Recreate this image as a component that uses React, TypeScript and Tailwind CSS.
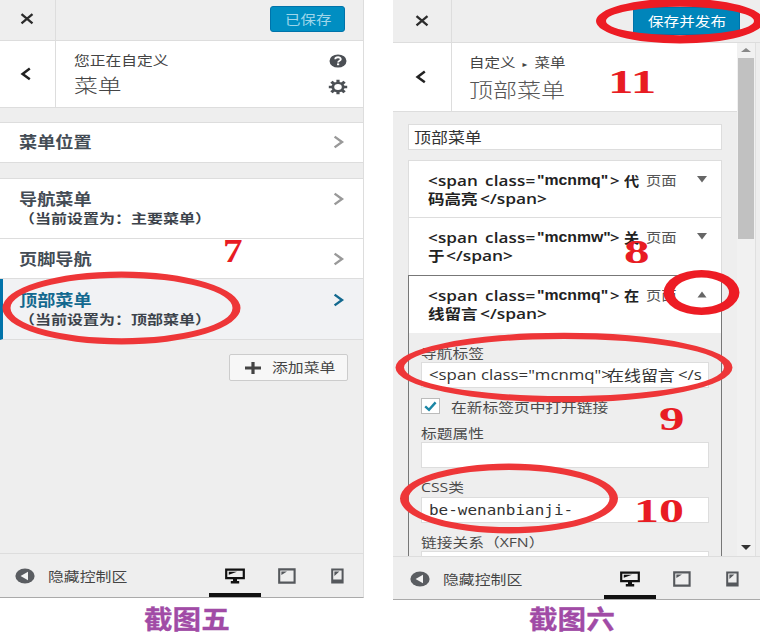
import type { ReactNode } from 'react'
import clsx from 'clsx'

const CJK = "font-['Noto_Sans_CJK_SC',sans-serif]"
const LATIN = "font-['Open_Sans','Noto_Sans_CJK_SC',sans-serif]"

// Wide-set text: the scale is given by the caller, always from the left edge
function Wide({ className, children }: { className?: string; children: ReactNode }) {
  return <span className={clsx('block origin-left whitespace-pre', className)}>{children}</span>
}

function CloseIcon() {
  return (
    <svg width="14" height="12" viewBox="0 0 14 12" fill="none" stroke="#2b2b2b" strokeWidth="2.3">
      <path d="M1.5 1.2 L12.5 10.4 M12.5 1.2 L1.5 10.4" />
    </svg>
  )
}

function BackIcon() {
  return (
    <svg width="12" height="14" viewBox="0 0 12 14" fill="none" stroke="#222" strokeWidth="2.5">
      <path d="M9.8 1.6 L2.6 7 L9.8 12.2" />
    </svg>
  )
}

function Chevron({ className }: { className?: string }) {
  return (
    <svg className={className} width="12" height="14" viewBox="0 0 12 14" fill="none" stroke="currentColor" strokeWidth="2.4">
      <path d="M1.6 1.6 L9 7 L1.6 12.4" />
    </svg>
  )
}

function HelpIcon() {
  return (
    <svg width="18" height="14" viewBox="0 0 18 14">
      <ellipse cx="9" cy="7" rx="8.5" ry="6.6" fill="#4b4f54" />
      <path d="M6.2 5.2 C6.4 2.6 11.8 2.6 11.8 5.2 C11.8 6.8 9.1 6.6 9.1 8.4" fill="none" stroke="#fff" strokeWidth="1.8" />
      <rect x="8" y="9.4" width="2.2" height="1.8" fill="#fff" />
    </svg>
  )
}

function GearIcon() {
  return (
    <svg width="20" height="16" viewBox="0 0 20 20" preserveAspectRatio="none" stroke="#4b4f54" fill="none">
      <path
        d="M10 0.8 V4 M10 16 V19.2 M0.8 10 H4 M16 10 H19.2 M3.4 3.4 L5.9 5.9 M14.1 14.1 L16.6 16.6 M16.6 3.4 L14.1 5.9 M5.9 14.1 L3.4 16.6"
        strokeWidth="3.2"
      />
      <circle cx="10" cy="10" r="5.2" strokeWidth="2.8" />
    </svg>
  )
}

function CollapseIcon() {
  return (
    <svg width="20" height="16" viewBox="0 0 20 16">
      <ellipse cx="10" cy="8" rx="9.6" ry="7.6" fill="#5a5d61" />
      <path d="M13 3.8 V12.2 L5.6 8 Z" fill="#f4f4f4" />
    </svg>
  )
}

function Devices() {
  return (
    <>
      <div className="flex w-[52px] flex-col items-center border-b-4 border-[#111] pt-[14px]">
        <svg width="20" height="16" viewBox="0 0 20 16">
          <path d="M1.2 1.6 H18.8 V10.2 H1.2 Z" fill="none" stroke="#111" strokeWidth="2.2" />
          <path d="M3.8 3.8 H12 L3.8 6.8 Z M8 11 H12 V13 H14.2 V15.4 H5.8 V13 H8 Z" fill="#111" />
        </svg>
      </div>
      <div className="flex w-[51px] justify-center pt-[14px]">
        <svg width="18" height="16" viewBox="0 0 18 16">
          <path d="M1.2 1.4 H16.6 V14.6 H1.2 Z" fill="none" stroke="#55585c" strokeWidth="2.1" />
          <path d="M3.4 3.4 H9 L3.4 7 Z" fill="#55585c" />
        </svg>
      </div>
      <div className="flex w-[51px] justify-center pt-[14px]">
        <svg width="13" height="16" viewBox="0 0 13 16">
          <path d="M1.2 1.4 H11.6 V14.6 H1.2 Z" fill="none" stroke="#55585c" strokeWidth="2" />
          <path d="M3.4 3.4 H8.4 L3.4 8 Z M2 11.6 H11 V14 H2 Z" fill="#55585c" />
        </svg>
      </div>
    </>
  )
}

function Footer({ className, devices }: { className?: string; devices: string }) {
  return (
    <div className={clsx('flex shrink-0 border-t border-[#ddd] bg-[#eee]', className)}>
      <div className="flex items-center pt-px">
        <CollapseIcon />
        <Wide className={clsx(CJK, 'ml-[13px] w-[80px] scale-x-[1.22] text-[13px] leading-4 text-[#444]')}>隐藏控制区</Wide>
      </div>
      <div className={clsx('flex', devices)}>
        <Devices />
      </div>
    </div>
  )
}

function MenuRow({ title, note, active, className }: { title: string; note?: string; active?: boolean; className?: string }) {
  return (
    <div
      className={clsx(
        'flex justify-between border-b border-[#ddd] pr-[18px]',
        active ? 'border-l-[3px] border-l-[#0073aa] bg-[#f1f2f4] pl-4' : 'bg-white pl-[19px]',
        className,
      )}
    >
      <div>
        <Wide className={clsx(CJK, 'scale-x-[1.17] text-[15.5px] font-bold leading-5', active ? 'text-[#13698f]' : 'text-[#444c55]')}>
          {title}
        </Wide>
        {note && <Wide className={clsx(CJK, 'scale-x-[1.23] text-[13px] font-bold leading-5 text-[#3c434b]')}>{note}</Wide>}
      </div>
      <Chevron className={clsx('mt-1', active ? 'text-[#13698f]' : 'text-[#999]')} />
    </div>
  )
}

function LeftPanel() {
  return (
    <section className="flex h-[598px] w-[364px] flex-col border-b border-r border-b-[#aaa] border-r-[#ddd] bg-[#eee]">
      <div className="flex h-[41px] shrink-0 border-b border-[#ddd]">
        <div className="flex w-14 items-center border-r border-[#ddd] pb-[2px] pl-5">
          <CloseIcon />
        </div>
        <div className="flex flex-1 justify-end pr-[18px] pt-[6px]">
          <div className="h-[26px] w-[75px] rounded-[3px] border border-[#0073aa] bg-[#008ec2] pl-[14px]">
            <Wide className={clsx(CJK, 'scale-x-[1.19] text-[13px] leading-[23px] text-[#9fd6ea]')}>已保存</Wide>
          </div>
        </div>
      </div>
      <div className="flex h-[67px] shrink-0 border-b border-[#ddd] bg-white">
        <div className="flex w-14 items-center border-r border-[#ddd] pl-5">
          <BackIcon />
        </div>
        <div className="flex-1 pl-[18px] pt-[9px]">
          <Wide className={clsx(CJK, 'scale-x-[1.21] text-[13px] leading-5 text-[#444]')}>您正在自定义</Wide>
          <Wide className={clsx(CJK, 'mt-[3px] scale-x-[1.22] text-[19.5px] font-light leading-6 text-[#444]')}>菜单</Wide>
        </div>
        <div className="flex w-10 flex-col items-center gap-[11px] pr-[10px] pt-[13px]">
          <HelpIcon />
          <GearIcon />
        </div>
      </div>
      <MenuRow title="菜单位置" className="mt-[14px] h-[41px] border-t pt-2" />
      <MenuRow title="导航菜单" note="（当前设置为：主要菜单）" className="mt-[15px] h-[61px] border-t pt-[9px]" />
      <MenuRow title="页脚导航" className="h-10 pt-[9px]" />
      <MenuRow title="顶部菜单" note="（当前设置为：顶部菜单）" active className="h-[61px] pt-[10px]" />
      <div className="flex flex-1 items-start justify-end pr-[15px] pt-[14px]">
        <div className="flex h-[27px] w-[119px] items-center rounded-[2px] border border-[#ccc] bg-[#f7f7f7] pl-[15px]">
          <svg width="16" height="14" viewBox="0 0 16 14" fill="#444">
            <path d="M6.4 1 H9.6 V5.4 H16 V8.6 H9.6 V13 H6.4 V8.6 H0 V5.4 H6.4 Z" />
          </svg>
          <Wide className={clsx(CJK, 'ml-[11px] scale-x-[1.22] pb-[2px] text-[13px] leading-5 text-[#444]')}>添加菜单</Wide>
        </div>
      </div>
      <Footer className="h-11 pl-[15px]" devices="ml-[81px]" />
    </section>
  )
}

function ItemTitle({ name, head, tail, tailWidth }: { name: string; head: string; tail: string; tailWidth: string }) {
  return (
    <div className={clsx(LATIN, 'text-[14px] font-semibold leading-[19px] text-[#222]')}>
      <div className="flex">
        <Wide className="w-[109px] scale-x-[1.22] tracking-[0.1px] [word-spacing:2px]">{'<span class='}</Wide>
        <Wide className="w-[73px] font-['Liberation_Sans',sans-serif] text-[14.5px] font-bold">
          <span className="inline-block origin-left scale-x-[1.09]">{`"${name}"`}</span>
        </Wide>
        <Wide className="w-[14px] scale-x-[1.2]">{'>'}</Wide>
        <Wide className="w-[22px] scale-x-[1.08] font-bold">{head}</Wide>
        <Wide className="scale-x-[1.18] font-['Noto_Sans_CJK_SC',sans-serif] text-[13px] font-normal leading-[17px] text-[#555]">页面</Wide>
      </div>
      <div className="-mt-px flex">
        <Wide className={clsx(tailWidth, 'scale-x-[1.18] font-bold')}>{tail}</Wide>
        <Wide className="scale-x-[1.24]">{'</span>'}</Wide>
      </div>
    </div>
  )
}

function Triangle({ up }: { up?: boolean }) {
  return (
    <svg className="mt-[5px]" width="10" height="7" viewBox="0 0 10 7" fill="#666">
      <path d={up ? 'M0.5 6.4 L5 0.6 L9.5 6.4 Z' : 'M0 0 H10 L5 6.4 Z'} />
    </svg>
  )
}

function Label({ className, children }: { className?: string; children: ReactNode }) {
  return <Wide className={clsx(CJK, 'scale-x-[1.21] text-[13px] leading-[18px] text-[#4a4a4a]', className)}>{children}</Wide>
}

function Field({ children, className }: { children?: ReactNode; className?: string }) {
  return <div className={clsx('flex h-[26px] w-[288px] border border-[#ddd] bg-white pl-[7px]', className)}>{children}</div>
}

function RightPanel() {
  return (
    <section className="flex h-[600px] w-[367px] flex-col border-b border-[#aaa] bg-[#eee]">
      <div className="flex h-[43px] shrink-0 border-b border-[#ddd]">
        <div className="flex w-[59px] items-center border-r border-[#ddd] pl-[22px]">
          <CloseIcon />
        </div>
        <div className="ml-[181px] mt-[7px] h-[28px] w-[107px] border border-[#0073aa] bg-[#0085ba] pl-[14px]">
          <Wide className={clsx(CJK, 'scale-x-[1.2] text-[13px] leading-[25px] text-white')}>保存并发布</Wide>
        </div>
      </div>

      <div className="flex h-[513px] shrink-0 overflow-hidden">
        <div className="w-[344px]">
          <div className="flex h-[69px] border-b border-[#ddd] bg-white">
            <div className="flex w-[59px] items-center border-r border-[#ddd] pl-[22px]">
              <BackIcon />
            </div>
            <div className="pl-[17px] pt-[9px]">
              <Wide className={clsx(CJK, 'flex scale-x-[1.19] text-[13px] leading-5 text-[#444]')}>
                <span className="w-[55px]">
                  自定义<span className="pl-[6px] font-['DejaVu_Sans',sans-serif] text-[8px]">▸</span>
                </span>
                <span>菜单</span>
              </Wide>
              <Wide className={clsx(CJK, 'mt-[3px] scale-x-[1.2] text-[20px] font-light leading-6 text-[#555]')}>顶部菜单</Wide>
            </div>
          </div>

          <div className="pl-[15px] pt-3">
            <div className="h-[26px] w-[314px] border border-[#ddd] bg-white pl-[5px]">
              <Wide className={clsx(CJK, 'scale-x-[1.13] text-[15px] leading-[23px] text-[#333]')}>顶部菜单</Wide>
            </div>

            <div className="mt-[10px] w-[314px]">
              <div className="flex h-[58px] justify-between border border-[#ddd] bg-white pl-[19px] pr-[14px] pt-[10px]">
                <ItemTitle name="mcnmq" head="代" tail="码高亮" tailWidth="w-[52px]" />
                <Triangle />
              </div>
              <div className="flex h-[57px] justify-between border-x border-[#ddd] bg-white pl-[19px] pr-[14px] pt-[10px]">
                <ItemTitle name="mcnmw" head="关" tail="于" tailWidth="w-[18px]" />
                <Triangle />
              </div>
              <div className="h-[300px] border border-[#777] bg-[#eee]">
                <div className="flex h-[57px] justify-between bg-white pl-[19px] pr-[14px] pt-[10px]">
                  <ItemTitle name="mcnmq" head="在" tail="线留言" tailWidth="w-[52px]" />
                  <Triangle up />
                </div>
                <div className="pl-3 pt-[11px]">
                  <Label>导航标签</Label>
                  <Field>
                    <Wide className={clsx(LATIN, 'w-[178px] scale-x-[1.2] text-[14px] leading-[24px] text-[#333]')}>{'<span class="mcnmq">'}</Wide>
                    <Wide className={clsx(CJK, 'w-[71px] scale-x-[1.13] text-[15px] leading-[23px] text-[#333]')}>在线留言</Wide>
                    <Wide className={clsx(LATIN, 'scale-x-[1.2] text-[14px] leading-[24px] text-[#333]')}>{'</s'}</Wide>
                  </Field>
                  <div className="mt-[10px] flex h-[18px]">
                    <div className="flex h-4 w-[19px] items-center justify-center border border-[#bbb] bg-white">
                      <svg width="13" height="11" viewBox="0 0 13 11" fill="none" stroke="#1b86a5" strokeWidth="2.4">
                        <path d="M1.2 5.4 L5 8.8 L11.6 1.4" />
                      </svg>
                    </div>
                    <Label className="ml-[11px] leading-[17px]">在新标签页中打开链接</Label>
                  </div>
                  <Label className="mt-2">标题属性</Label>
                  <Field />
                  <Label className="mt-[10px] leading-[17px]">
                    <span className="font-['Open_Sans',sans-serif]">CSS</span>类
                  </Label>
                  <Field className="mt-px">
                    <Wide className="scale-x-[1.14] font-['DejaVu_Sans_Mono',monospace] text-[14px] leading-[25px] text-[#333]">be-wenanbianji-</Wide>
                  </Field>
                  <Label className="mt-[10px]">
                    链接关系（<span className="font-['Open_Sans',sans-serif]">XFN</span>）
                  </Label>
                  <Field />
                </div>
              </div>
            </div>
          </div>
        </div>

        <div className="flex w-[19px] flex-col items-center border-r border-[#e0e0e0] bg-[#f1f1f1] pt-[5px]">
          <svg width="10" height="5" viewBox="0 0 10 5" fill="#888">
            <path d="M0 4 L5 0 L10 4 Z" />
          </svg>
          <div className="mt-[5px] h-[181px] w-4 bg-[#c1c1c1]" />
          <svg className="mb-[6px] mt-auto" width="10" height="5" viewBox="0 0 10 5" fill="#333">
            <path d="M0 0 H10 L5 5 Z" />
          </svg>
        </div>
      </div>

      <Footer className="h-[43px] pl-[17px]" devices="ml-[81px]" />
    </section>
  )
}

interface RingShape {
  cx: number
  cy: number
  outer: [number, number]
  inner: [number, number]
  color: string
}

const RINGS: RingShape[] = [
  { cx: 121.5, cy: 308, outer: [119, 36.5], inner: [111, 30.2], color: '#ee3638' },
  { cx: 680, cy: 21, outer: [84, 22.5], inner: [74, 14.2], color: '#ed1c24' },
  { cx: 701.5, cy: 292.5, outer: [38, 22.5], inner: [27.5, 15], color: '#ed1c24' },
  { cx: 564, cy: 367.5, outer: [168.5, 34.8], inner: [160, 28.6], color: '#ee3638' },
  { cx: 509, cy: 498.5, outer: [109, 35], inner: [100.5, 28.6], color: '#ee3638' },
]

function ellipsePath(cx: number, cy: number, [rx, ry]: [number, number]) {
  return `M${cx - rx} ${cy} a${rx} ${ry} 0 1 0 ${rx * 2} 0 a${rx} ${ry} 0 1 0 ${-rx * 2} 0 Z`
}

function Rings() {
  return (
    <svg className="pointer-events-none absolute inset-0" width="760" height="640" viewBox="0 0 760 640">
      {RINGS.map((r) => (
        <path
          key={`${r.cx}-${r.cy}`}
          d={ellipsePath(r.cx, r.cy, r.outer) + ellipsePath(r.cx, r.cy, r.inner)}
          fill={r.color}
          fillRule="evenodd"
        />
      ))}
    </svg>
  )
}

function Step({ className, children }: { className: string; children: ReactNode }) {
  return (
    <span
      className={clsx(
        "absolute origin-left whitespace-nowrap font-['Liberation_Serif',serif] text-[34px] font-bold leading-[34px] text-[#e81c23]",
        className,
      )}
    >
      {children}
    </span>
  )
}

function Caption({ className, children }: { className?: string; children: ReactNode }) {
  return (
    <Wide className={clsx(CJK, 'scale-x-[1.1] text-[26px] font-bold leading-[30px] text-[#a14ba6] [-webkit-text-stroke:0.3px_#a14ba6]', className)}>
      {children}
    </Wide>
  )
}

export default function App() {
  return (
    <main className="relative flex h-[640px] w-[760px] gap-[29px] overflow-hidden bg-white">
      <div className="w-[364px]">
        <LeftPanel />
        <Caption className="ml-[144px] mt-[5px]">截图五</Caption>
      </div>
      <div className="w-[367px]">
        <RightPanel />
        <Caption className="ml-[136px] mt-[3px]">截图六</Caption>
      </div>
      <Rings />
      <Step className="left-[223px] top-[234px] scale-x-[1.15]">7</Step>
      <Step className="left-[624px] top-[235px] scale-x-[1.5]">8</Step>
      <Step className="left-[659px] top-[402px] scale-x-[1.5]">9</Step>
      <Step className="left-[634px] top-[494px] scale-x-[1.47]">10</Step>
      <Step className="left-[608px] top-[65px] scale-x-[1.5]">11</Step>
    </main>
  )
}
